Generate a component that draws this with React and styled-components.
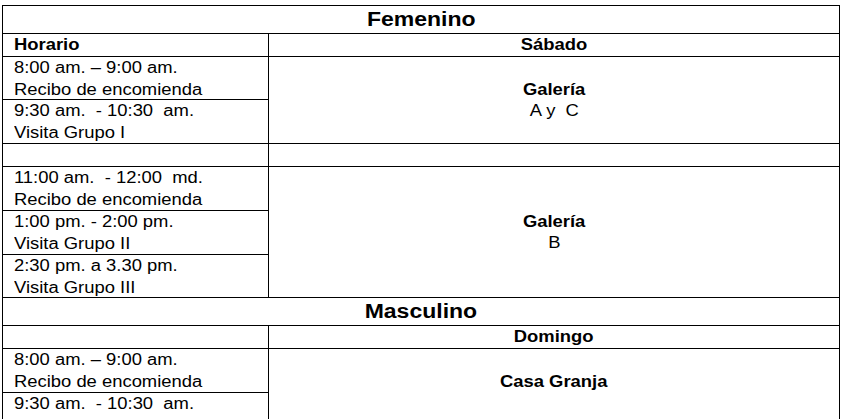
import React from "react";
import styled, { createGlobalStyle } from "styled-components";

const GlobalStyle = createGlobalStyle`
  html, body {
    margin: 0;
    overflow: hidden;
    background: #fff;
  }
  body {
    font-family: "Liberation Sans", Arial, sans-serif;
    color: #000;
  }
`;

const Page = styled.div`
  padding: 5px 0 0 2px;
`;

// the grid gap shows the black background through, so it draws the rules
const Schedule = styled.div`
  display: grid;
  grid-template-columns: 265px 570px;
  grid-template-rows: 27px 22px 42px 43px 22px 43px 43px 42px 27px 22px 43px 43px;
  gap: 1px;
  padding: 1px;
  width: max-content;
  background: #000;
`;

const Cell = styled.div`
  background: #fff;
  display: flex;
  flex-direction: column;
  padding-left: ${(p) => (p.$center ? "0" : "11px")};
  align-items: ${(p) => (p.$center ? "center" : "flex-start")};
  justify-content: ${(p) => (p.$middle ? "center" : "flex-start")};
  grid-row: ${(p) => (p.$span ? `span ${p.$span}` : "auto")};
  grid-column: ${(p) => (p.$full ? "1 / -1" : "auto")};
  overflow: hidden;
`;

const Line = styled.span`
  display: block;
  min-height: 21.5px;
  font-size: ${(p) => (p.$big ? "20px" : "16px")};
  font-weight: ${(p) => (p.$bold ? 700 : 400)};
  line-height: 21.5px;
  white-space: pre;
  transform: scaleX(1.15);
  transform-origin: ${(p) => (p.$center ? "center" : "left")};
`;

const Title = ({ children }) => (
  <Cell $full $center $middle>
    <Line $big $bold $center>
      {children}
    </Line>
  </Cell>
);

const Slot = ({ time, label }) => (
  <Cell>
    <Line>{time}</Line>
    {label && <Line>{label}</Line>}
  </Cell>
);

const Place = ({ span, name, detail }) => (
  <Cell $span={span} $center $middle>
    <Line $bold $center>
      {name}
    </Line>
    <Line $center>{detail}</Line>
  </Cell>
);

export default function App() {
  return (
    <Page>
      <GlobalStyle />
      <Schedule>
        <Title>Femenino</Title>
        <Cell>
          <Line $bold>Horario</Line>
        </Cell>
        <Cell $center>
          <Line $bold $center>
            Sábado
          </Line>
        </Cell>

        <Slot time="8:00 am. – 9:00 am." label="Recibo de encomienda" />
        <Place span={2} name="Galería" detail="A y  C" />
        <Slot time="9:30 am.  - 10:30  am." label="Visita Grupo I" />

        <Cell />
        <Cell />

        <Slot time="11:00 am.  - 12:00  md." label="Recibo de encomienda" />
        <Place span={3} name="Galería" detail="B" />
        <Slot time="1:00 pm. - 2:00 pm." label="Visita Grupo II" />
        <Slot time="2:30 pm. a 3.30 pm." label="Visita Grupo III" />

        <Title>Masculino</Title>
        <Cell />
        <Cell $center>
          <Line $bold $center>
            Domingo
          </Line>
        </Cell>

        <Slot time="8:00 am. – 9:00 am." label="Recibo de encomienda" />
        <Place span={2} name="Casa Granja" detail="" />
        <Slot time="9:30 am.  - 10:30  am." />
      </Schedule>
    </Page>
  );
}
